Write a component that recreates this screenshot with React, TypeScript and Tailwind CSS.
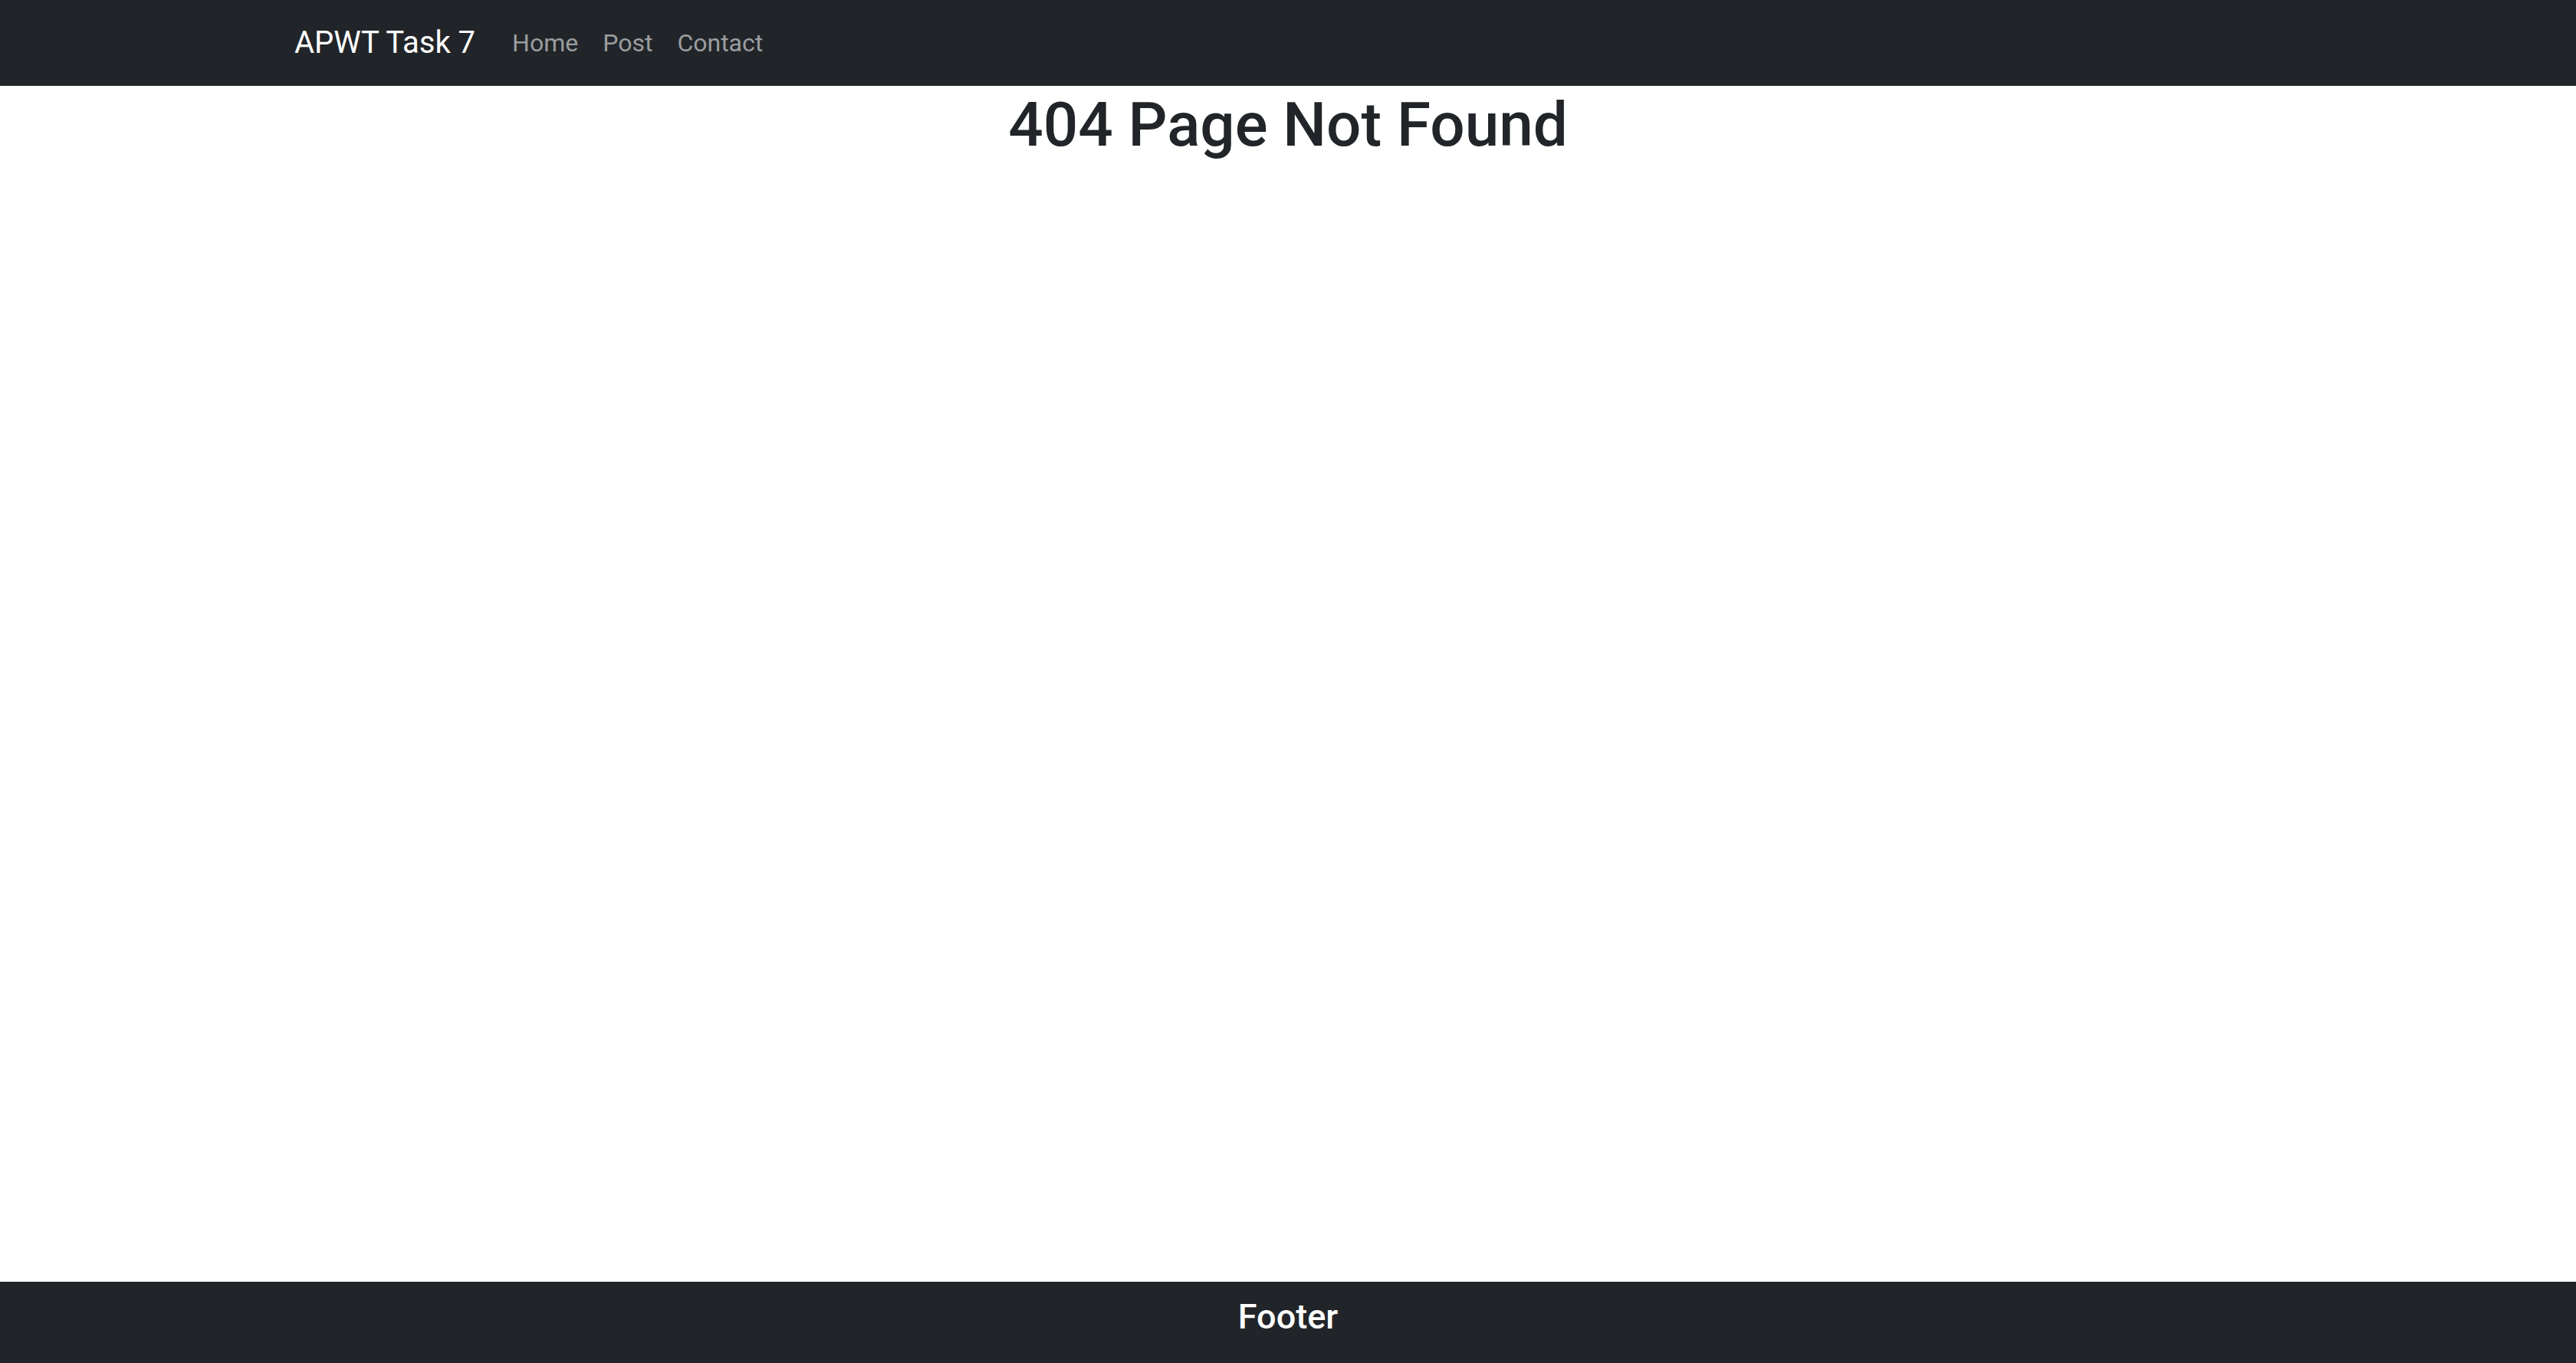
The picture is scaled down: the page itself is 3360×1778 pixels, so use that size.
import React from 'react';

const links = ['Home', 'Post', 'Contact'];

const Navbar = () => {
  return (
    <nav className="flex h-[112px] items-center bg-[#212529]">
      <div className="mx-auto flex w-full max-w-[2640px] items-center px-6">
        <a href="#" className="mr-8 text-[40px] leading-[1.5] text-white">
          APWT Task 7
        </a>
        <ul className="flex">
          {links.map((link) => (
            <li key={link}>
              <a
                href="#"
                className="block px-4 text-[32px] leading-[1.5] text-[#9b9d9f]"
              >
                {link}
              </a>
            </li>
          ))}
        </ul>
      </div>
    </nav>
  );
};

const Footer = () => {
  return (
    <footer className="flex h-[106px] items-center justify-center bg-[#212529] pb-[14px]">
      <h4 className="text-[45px] font-medium leading-[1.2] text-white">
        Footer
      </h4>
    </footer>
  );
};

const App = () => {
  return (
    <div className="flex min-h-screen flex-col bg-white font-['Roboto',sans-serif] text-[#212529]">
      <Navbar />
      <main className="flex-1 pt-[3px]">
        <h1 className="text-center text-[80px] font-medium leading-[1.2]">
          404 Page Not Found
        </h1>
      </main>
      <Footer />
    </div>
  );
};

export default App;
